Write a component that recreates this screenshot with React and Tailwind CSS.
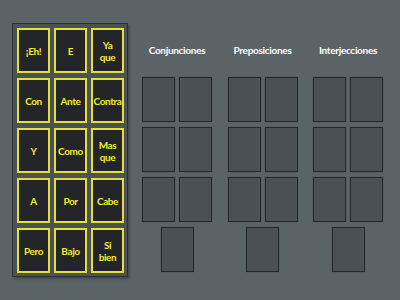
import React from "react";

const cards = [
  [["¡Eh!"], ["E"], ["Ya", "que"]],
  [["Con"], ["Ante"], ["Contra"]],
  [["Y"], ["Como"], ["Mas", "que"]],
  [["A"], ["Por"], ["Cabe"]],
  [["Pero"], ["Bajo"], ["Si", "bien"]],
];

const groups = ["Conjunciones", "Preposiciones", "Interjecciones"];

function Box() {
  return (
    <div className="w-[33px] h-[45px] bg-[#4a5053] border border-[#25292b] shadow-[0_0_1px_rgba(0,0,0,0.3)]" />
  );
}

export default function App() {
  return (
    <div
      className="w-[400px] h-[300px] bg-[#5c6367] flex"
      style={{ fontFamily: "Lato, 'Open Sans', sans-serif" }}
    >
      <div className="ml-[12px] mt-[23px] w-[116px] h-[254px] bg-[#4b5155] border border-[#2c3033] shadow-[2px_2px_2px_rgba(0,0,0,0.25)] pl-[4px] pt-[4px]">
        <div className="grid grid-cols-[repeat(3,33px)] gap-x-[4px] gap-y-[5px]">
          {cards.flat().map((lines, i) => (
            <div
              key={i}
              className="w-[33px] h-[45px] bg-[#232528] border-2 border-[#e2df3c] flex flex-col items-center justify-center text-center text-[#f0ec28] font-bold text-[10px] leading-[12px] tracking-[-0.4px] whitespace-nowrap"
            >
              {lines.map((l, j) => (
                <span key={j}>{l}</span>
              ))}
            </div>
          ))}
        </div>
      </div>
      <div className="ml-[14px] mt-[43px] flex gap-[15.5px]">
        {groups.map((g) => (
          <div key={g} className="w-[70px] flex flex-col items-center">
            <div className="h-[14px] text-white font-bold text-[10px] leading-[14px] tracking-[-0.3px] whitespace-nowrap">
              {g}
            </div>
            <div className="mt-[20px] grid grid-cols-[repeat(2,33px)] gap-x-[4px] gap-y-[5px]">
              {Array.from({ length: 6 }).map((_, i) => (
                <Box key={i} />
              ))}
            </div>
            <div className="mt-[5px]">
              <Box />
            </div>
          </div>
        ))}
      </div>
    </div>
  );
}
